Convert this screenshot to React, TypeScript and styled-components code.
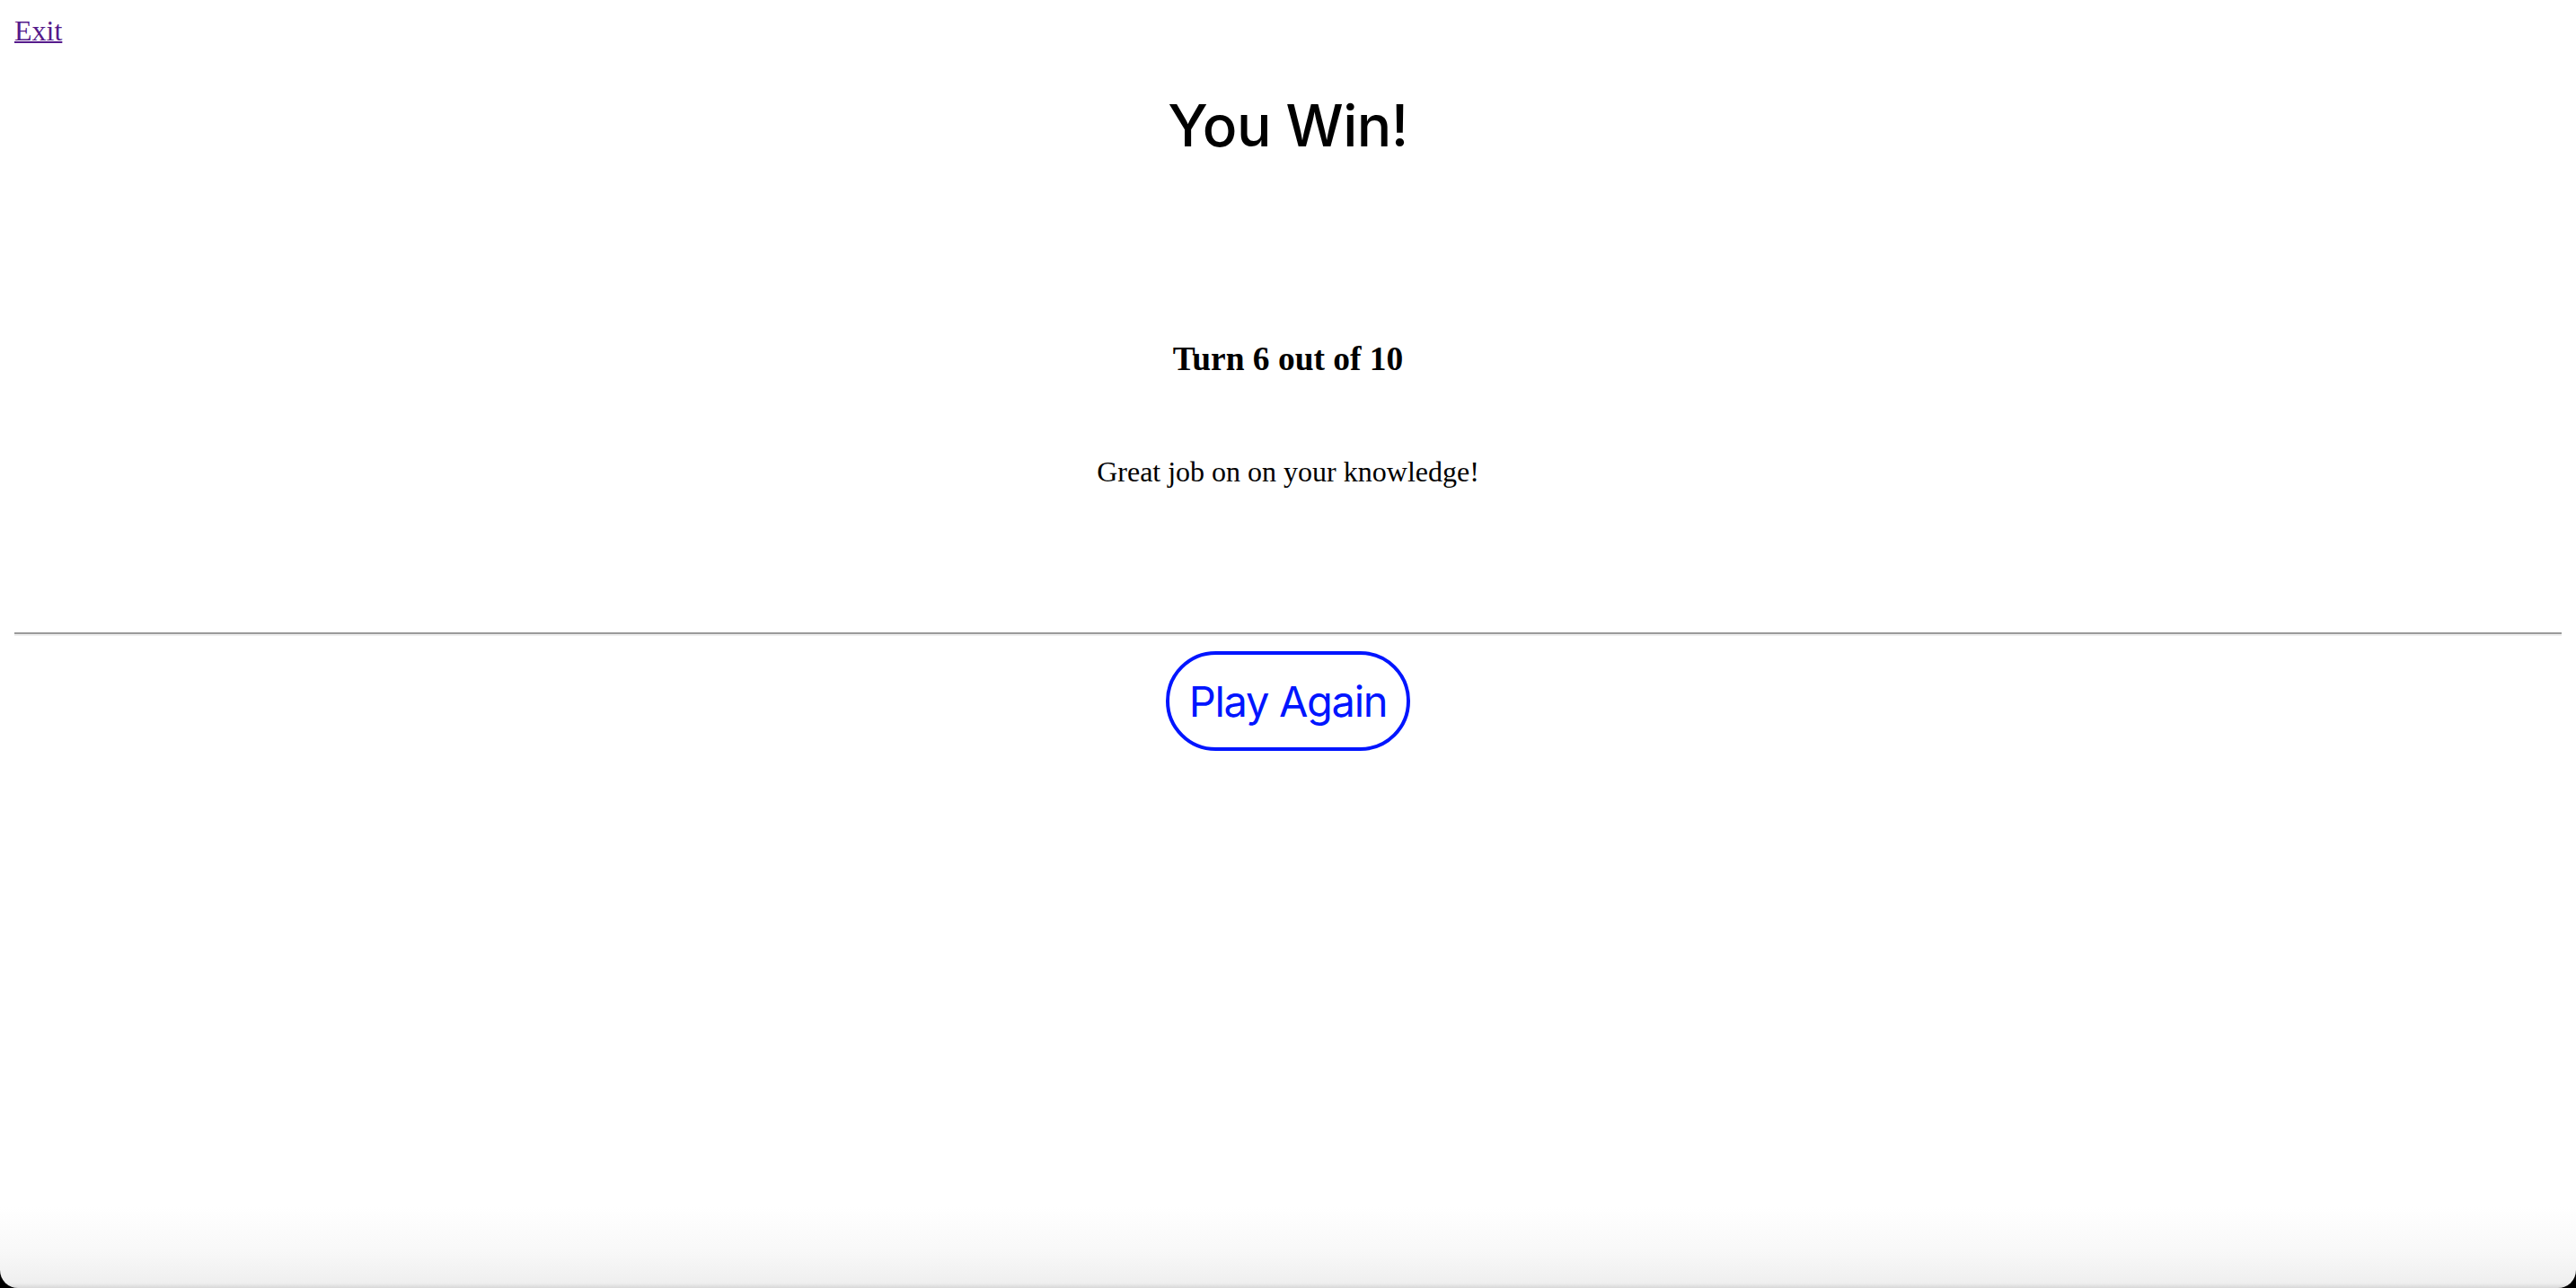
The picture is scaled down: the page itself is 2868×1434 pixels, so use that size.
import React from 'react';
import styled, { createGlobalStyle } from 'styled-components';

const GlobalStyle = createGlobalStyle`
  html, body {
    margin: 0;
    padding: 0;
    background: #ffffff;
  }
  body {
    font-family: "Liberation Serif", "Times New Roman", serif;
  }
`;

const Page = styled.div`
  min-height: 1434px;
  box-sizing: border-box;
  padding: 16px;
  display: flex;
  flex-direction: column;
`;

const ExitLink = styled.a`
  align-self: flex-start;
  font-family: "Liberation Serif", "Times New Roman", serif;
  font-size: 32px;
  line-height: 37px;
  color: #551a8b;
  text-decoration: underline;
  text-decoration-thickness: 2px;
`;

const Title = styled.h1`
  margin: 48px 0 0;
  text-align: center;
  font-family: Inter, "Noto Sans", sans-serif;
  font-weight: 500;
  font-size: 64px;
  line-height: 77px;
  letter-spacing: -0.5px;
  color: #000;
`;

const Turn = styled.h3`
  margin: 200px 0 0;
  text-align: center;
  font-family: "Liberation Serif", "Times New Roman", serif;
  font-weight: 700;
  font-size: 37.44px;
  line-height: 43px;
  color: #000;
`;

const Message = styled.p`
  margin: 86px 0 0;
  text-align: center;
  font-family: "Liberation Serif", "Times New Roman", serif;
  font-size: 32px;
  line-height: 37px;
  color: #000;
`;

const Divider = styled.hr`
  margin: 160px 0 0;
  height: 0;
  border: 0;
  border-top: 2px solid #9a9a9a;
  border-bottom: 2px solid #eeeeee;
`;

const ButtonRow = styled.div`
  display: flex;
  justify-content: center;
  margin-top: 17px;
`;

const PlayButton = styled.button`
  box-sizing: border-box;
  height: 111px;
  width: 272px;
  padding: 0;
  border: 4px solid #0015ff;
  border-radius: 56px;
  background: #ffffff;
  color: #0015ff;
  font-family: Inter, "Noto Sans", sans-serif;
  font-size: 47px;
  letter-spacing: -1.3px;
  cursor: pointer;
`;

const WindowEdge = styled.div`
  position: fixed;
  left: 0;
  right: 0;
  bottom: 0;
  height: 90px;
  pointer-events: none;
  background: #000;
`;

const WindowFade = styled.div`
  height: 100%;
  border-radius: 0 0 20px 20px;
  background: linear-gradient(to bottom, #ffffff 0%, #f8f8f8 55%, #efefef 94%, #d8d8d8 100%);
`;

export default function App() {
  return (
    <>
      <GlobalStyle />
      <Page>
        <ExitLink href="#">Exit</ExitLink>
        <Title>You Win!</Title>
        <Turn>Turn 6 out of 10</Turn>
        <Message>Great job on on your knowledge!</Message>
        <Divider />
        <ButtonRow>
          <PlayButton>Play Again</PlayButton>
        </ButtonRow>
      </Page>
      <WindowEdge>
        <WindowFade />
      </WindowEdge>
    </>
  );
}
